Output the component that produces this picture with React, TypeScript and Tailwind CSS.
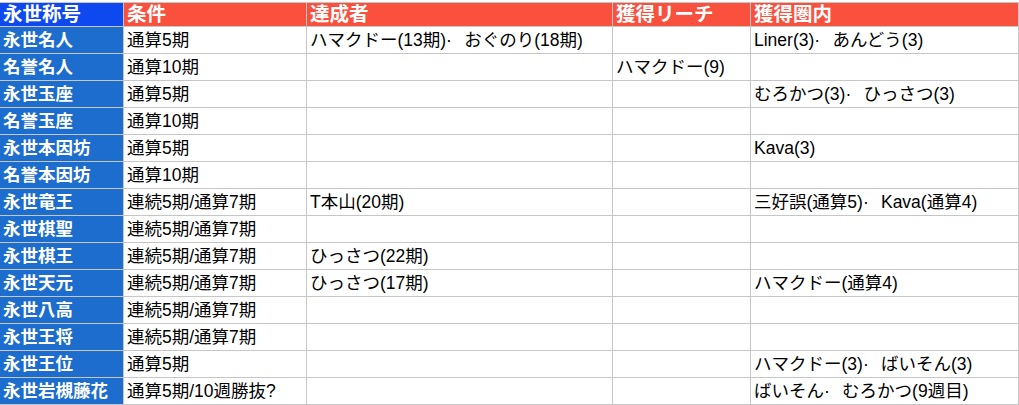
import React from 'react';

const headers = ['永世称号', '条件', '達成者', '獲得リーチ', '獲得圏内'];

// 区切りは「·」+少し広めの空白
const SEP = '·\u2002\u2009';

const rows: string[][] = [
  ['永世名人', '通算5期', `ハマクドー(13期)${SEP}おぐのり(18期)`, '', `Liner(3)${SEP}あんどう(3)`],
  ['名誉名人', '通算10期', '', 'ハマクドー(9)', ''],
  ['永世玉座', '通算5期', '', '', `むろかつ(3)${SEP}ひっさつ(3)`],
  ['名誉玉座', '通算10期', '', '', ''],
  ['永世本因坊', '通算5期', '', '', 'Kava(3)'],
  ['名誉本因坊', '通算10期', '', '', ''],
  ['永世竜王', '連続5期/通算7期', 'T本山(20期)', '', `三好誤(通算5)${SEP}Kava(通算4)`],
  ['永世棋聖', '連続5期/通算7期', '', '', ''],
  ['永世棋王', '連続5期/通算7期', 'ひっさつ(22期)', '', ''],
  ['永世天元', '連続5期/通算7期', 'ひっさつ(17期)', '', 'ハマクドー(通算4)'],
  ['永世八高', '連続5期/通算7期', '', '', ''],
  ['永世王将', '連続5期/通算7期', '', '', ''],
  ['永世王位', '通算5期', '', '', `ハマクドー(3)${SEP}ばいそん(3)`],
  ['永世岩槻藤花', '通算5期/10週勝抜?', '', '', `ばいそん${SEP}むろかつ(9週目)`],
];

export default function App() {
  return (
    <div className="w-[1019px] h-[405px] bg-white pt-[2px] overflow-hidden font-['Liberation_Sans','Noto_Sans_CJK_JP',sans-serif]">
      <div className="grid grid-cols-[123px_182px_305px_137px_267px] grid-rows-[23px] auto-rows-[26px] gap-px bg-[#c6c6c6] pt-px pr-px pb-px">
        {headers.map((h, i) => (
          <div
            key={h}
            className={`flex items-center pl-[3px] text-[19.5px] font-bold text-white whitespace-nowrap overflow-hidden ${i === 0 ? 'bg-[#0d49ef]' : 'bg-[#fa513f]'}`}
          >
            {h}
          </div>
        ))}
        {rows.map((r) =>
          r.map((c, j) => (
            <div
              key={r[0] + j}
              className={
                j === 0
                  ? 'flex items-center pl-[3px] bg-[#1c6dcd] text-white font-bold text-[17.5px] whitespace-nowrap overflow-hidden'
                  : 'flex items-center pl-[3px] bg-white text-black text-[17.5px] whitespace-nowrap overflow-hidden'
              }
            >
              {c}
            </div>
          ))
        )}
      </div>
    </div>
  );
}
